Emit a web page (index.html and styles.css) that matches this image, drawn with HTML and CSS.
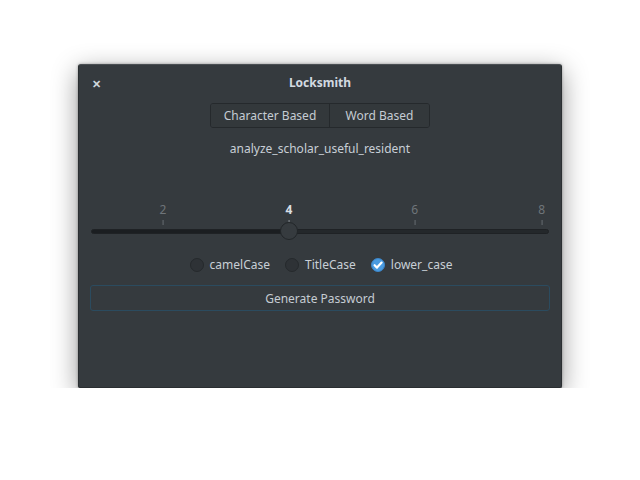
FILE: index.html
```html
<!DOCTYPE html>
<html>
<head>
<meta charset="utf-8">
<link rel="stylesheet" href="styles.css">
</head>
<body>
<div class="window">
  <div class="titlebar">
    <span class="close">&#x2715;</span>
    <span class="title">Locksmith</span>
  </div>
  <div class="content">
    <div class="segmented">
      <button class="seg">Character Based</button>
      <button class="seg">Word Based</button>
    </div>
    <div class="password">analyze_scholar_useful_resident</div>
    <div class="scale">
      <div class="marks">
        <div class="mark" style="left:15.7%"><span>2</span><i></i></div>
        <div class="mark current" style="left:43.2%"><span>4</span><i></i></div>
        <div class="mark" style="left:70.7%"><span>6</span><i></i></div>
        <div class="mark" style="left:98.4%"><span>8</span><i></i></div>
      </div>
      <div class="trough">
        <div class="fill" style="width:43.2%"></div>
        <div class="knob" style="left:43.2%"></div>
      </div>
    </div>
    <div class="radios">
      <label class="radio"><span class="dot"></span>camelCase</label>
      <label class="radio"><span class="dot"></span>TitleCase</label>
      <label class="radio"><span class="dot checked"><svg width="14" height="14" viewBox="0 0 14 14"><path d="M3.6 7.2 L6 9.6 L10.6 4.6" fill="none" stroke="#fff" stroke-width="2.2" stroke-linecap="round" stroke-linejoin="round"/></svg></span>lower_case</label>
    </div>
    <button class="generate">Generate Password</button>
  </div>
</div>
</body>
</html>
```
FILE: styles.css
```css
* { box-sizing: border-box; }
html, body { margin: 0; padding: 0; background: #ffffff; }
body {
  padding-top: 64px;
  font-family: "Noto Sans", "Open Sans", sans-serif;
  font-size: 12px;
  color: #c5ccd3;
}
.window {
  width: 484px;
  height: 324px;
  margin: 0 auto;
  background: #353a3e;
  border: 1px solid #2a2e31;
  border-top-color: #4a4f53;
  border-radius: 3px 3px 2px 2px;
  box-shadow: 0 7px 26px rgba(0,0,0,0.42), 0 0 3px rgba(0,0,0,0.35);
}
.titlebar {
  position: relative;
  height: 37px;
  display: flex;
  align-items: center;
  justify-content: center;
}
.title {
  font-weight: bold;
  color: #d3dae1;
  font-size: 12px;
  margin-top: -2px;
}
.close {
  position: absolute;
  left: 13px;
  top: 11px;
  font-size: 11px;
  font-weight: bold;
  color: #d0d6dc;
}
.content {
  padding: 1px 11px 0 11px;
  display: flex;
  flex-direction: column;
  align-items: center;
}
.segmented {
  display: flex;
  border: 1px solid #25292c;
  border-radius: 3px;
  overflow: hidden;
}
.seg {
  font: inherit;
  color: #c5ccd3;
  background: #33383b;
  border: none;
  height: 23px;
  padding: 0;
  line-height: 23px;
  white-space: nowrap;
}
.seg:first-child { width: 119px; border-right: 1px solid #25292c; }
.seg:last-child { width: 99px; }
.password {
  margin-top: 11px;
  line-height: 20px;
  color: #c8cfd6;
}
.scale {
  align-self: stretch;
  margin-top: 43px;
  padding: 0 1px;
}
.marks {
  position: relative;
  height: 24px;
}
.mark {
  position: absolute;
  top: 0;
  transform: translateX(-50%);
  display: flex;
  flex-direction: column;
  align-items: center;
  color: #6f757a;
  font-size: 12px;
  line-height: 16px;
}
.mark i {
  display: block;
  width: 1px;
  height: 5px;
  margin-top: 2px;
  background: #666c71;
}
.mark.current { color: #d8dee4; font-weight: bold; }
.mark.current i { background: #8a9096; }
.trough {
  position: relative;
  margin-top: 3px;
  height: 5px;
  border-radius: 3px;
  background: #24282b;
  border: 1px solid #1f2225;
}
.fill {
  height: 100%;
  background: #1b1e21;
  border-radius: 3px 0 0 3px;
}
.knob {
  position: absolute;
  top: -8px;
  width: 18px;
  height: 18px;
  margin-left: -9px;
  border-radius: 50%;
  background: #363b3f;
  border: 1px solid #222629;
}
.radios {
  display: flex;
  gap: 15px;
  margin-top: 22px;
  margin-left: 2px;
}
.radio {
  display: flex;
  align-items: center;
  gap: 6px;
  color: #c8cfd6;
  line-height: 18px;
}
.dot {
  width: 14px;
  height: 14px;
  border-radius: 50%;
  background: #2e3236;
  border: 1px solid #25292c;
  display: flex;
  align-items: center;
  justify-content: center;
}
.dot.checked {
  background: #4a9be0;
  border-color: #3b85c8;
}
.dot.checked svg { display: block; margin: -1px; }
.generate {
  align-self: stretch;
  margin-top: 11px;
  height: 26px;
  font: inherit;
  color: #c5ccd3;
  background: #353a3e;
  border: 1px solid #2b4b5f;
  border-radius: 3px;
}
```
